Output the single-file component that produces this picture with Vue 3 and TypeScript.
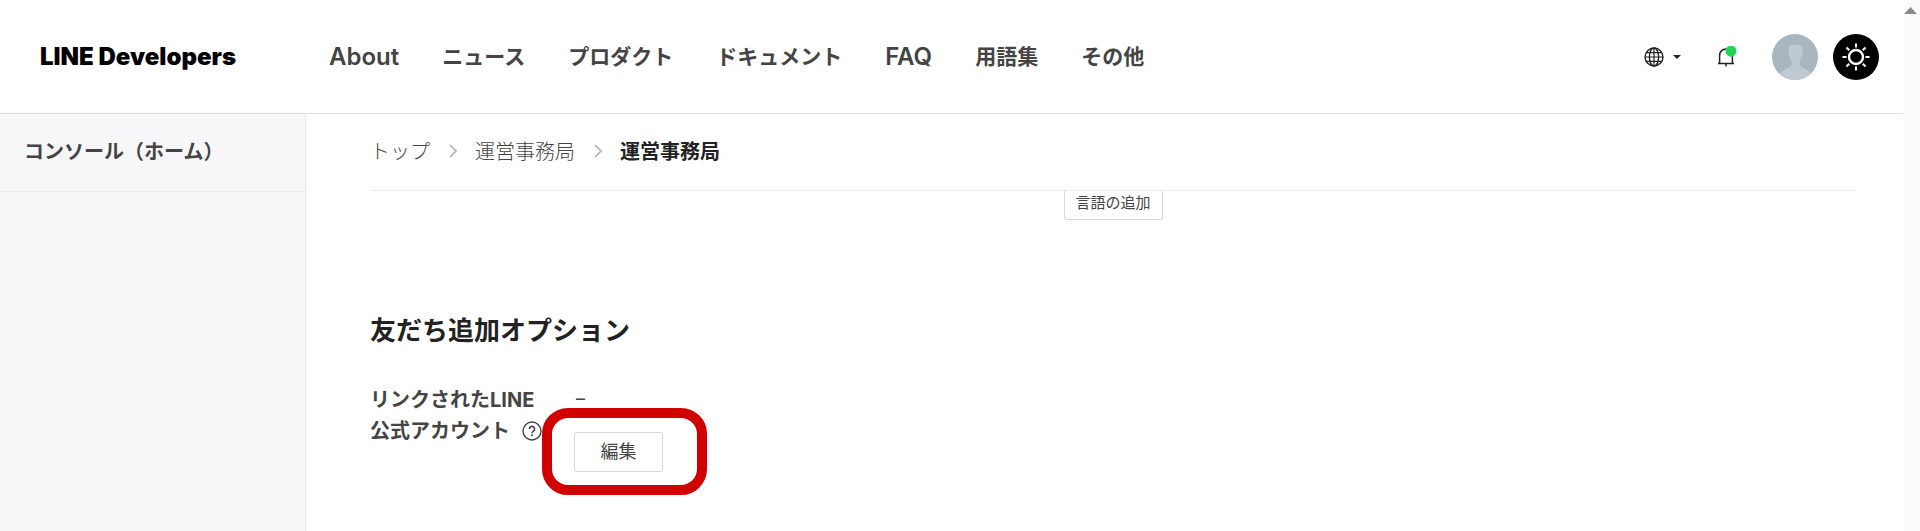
<script setup lang="ts">
interface NavItem {
  label: string
  latin?: boolean
}

const navItems: NavItem[] = [
  { label: 'About', latin: true },
  { label: 'ニュース' },
  { label: 'プロダクト' },
  { label: 'ドキュメント' },
  { label: 'FAQ', latin: true },
  { label: '用語集' },
  { label: 'その他' },
]

const parents: string[] = ['トップ', '運営事務局']
const rays: number[] = [0, 45, 90, 135, 180, 225, 270, 315]
</script>

<template>
  <div class="page">
    <div class="app">
      <header class="header">
        <a class="logo" href="#">LINE Developers</a>
        <nav class="nav">
          <a v-for="item in navItems" :key="item.label" href="#" :class="{ latin: item.latin }">{{ item.label }}</a>
        </nav>
        <div class="tools">
          <button class="lang" type="button" aria-label="Language">
            <svg width="20" height="20" viewBox="0 0 20 20" fill="none" stroke="#222" stroke-width="1.4">
              <circle cx="10" cy="10" r="9" />
              <ellipse cx="10" cy="10" rx="4.6" ry="9" />
              <path d="M10 1v18M1 10h18M2.600 5.600h14.800M2.600 14.400h14.800" stroke-width="1.2" />
            </svg>
            <svg width="8" height="4" viewBox="0 0 8 4"><path d="M0 0h8L4 4z" fill="#222" /></svg>
          </button>
          <button class="bell" type="button" aria-label="Notifications">
            <svg width="20" height="22" viewBox="0 0 20 22" fill="none" stroke="#222" stroke-width="1.5">
              <path d="M1 17.5h16M2.6 17.5V9.4a6.4 6.4 0 0 1 12.8 0v8.1M9 17.5v3" />
              <circle cx="14" cy="5.2" r="5.5" fill="#1fd655" stroke="none" />
            </svg>
          </button>
          <button class="round avatar" type="button" aria-label="Account">
            <svg width="46" height="46" viewBox="0 0 46 46">
              <path d="M17 14c0-2.600 2-3 6.500-3s6.500.4 6.500 3l.600 5c0 2.500-1 5-3 7.500v5c2 3 9.500 4 12.500 9.500A23 23 0 0 1 7 41c3-5.500 10.500-6.500 12.500-9.500v-5c-2-2.500-3-5-3-7.500z" fill="#bfc9d1" />
            </svg>
          </button>
          <button class="round theme" type="button" aria-label="Theme">
            <svg width="46" height="46" viewBox="0 0 46 46" fill="none" stroke="#fff" stroke-width="2">
              <circle cx="23" cy="23" r="7" stroke-width="2.4" />
              <path v-for="angle in rays" :key="angle" d="M23 9.500v4" :transform="`rotate(${angle} 23 23)`" />
            </svg>
          </button>
        </div>
      </header>
      <div class="body">
        <aside class="sidebar"><a href="#">コンソール（ホーム）</a></aside>
        <main class="main">
          <nav class="crumbs">
            <template v-for="parent in parents" :key="parent">
              <a href="#">{{ parent }}</a>
              <svg width="8" height="14" viewBox="0 0 8 14" fill="none" stroke="#b0b0b0" stroke-width="1.6"><path d="M1 1l6 6-6 6" /></svg>
            </template>
            <strong>運営事務局</strong>
          </nav>
          <div class="add-row"><button class="btn add" type="button">言語の追加</button></div>
          <h2>友だち追加オプション</h2>
          <section class="field">
            <h3>
              リンクされたLINE<br />公式アカウント
              <svg class="help" width="20" height="20" viewBox="0 0 20 20" fill="none" stroke="#444" stroke-width="1.4">
                <circle cx="10" cy="10" r="9" />
                <path d="M7.400 8a2.600 2.600 0 1 1 4 2.200c-.9.600-1.400 1-1.400 2" stroke-width="1.600" />
                <circle cx="10" cy="14.300" r="1" fill="#444" stroke="none" />
              </svg>
            </h3>
            <div class="value">
              <span class="dash">–</span>
              <div class="edit-wrap"><button class="btn edit" type="button">編集</button></div>
            </div>
          </section>
        </main>
      </div>
    </div>
    <div class="scroll-track"><svg width="13" height="7" viewBox="0 0 13 7"><path d="M0 7L6.500 0 13 7z" fill="#8a8a8a" /></svg></div>
  </div>
</template>

<style>
body {
  margin: 0;
  background: #fff;
  overflow: hidden;
}
</style>

<style scoped>
* {
  box-sizing: border-box;
}
.page {
  display: flex;
  min-height: 100vh;
  font-family: Inter, "Noto Sans CJK JP", sans-serif;
  color: #444;
}
.app {
  flex: 1;
  display: flex;
  flex-direction: column;
}
a {
  color: inherit;
  text-decoration: none;
}
button {
  padding: 0;
  border: 0;
  background: none;
  color: inherit;
  font-family: inherit;
}
svg {
  display: block;
}
.header {
  display: flex;
  align-items: center;
  height: 114px;
  padding: 0 24px 0 40px;
  border-bottom: 1px solid #dfdfdf;
}
.logo {
  width: 289px;
  color: #000;
  font-size: 24px;
  font-weight: 900;
}
.nav {
  display: flex;
  align-items: center;
  gap: 43px;
  font-size: 21px;
  line-height: 32px;
  font-weight: 700;
  white-space: nowrap;
}
.nav .latin {
  font-size: 24px;
  font-weight: 600;
}
.tools {
  display: flex;
  align-items: center;
  margin-left: auto;
}
.lang {
  display: flex;
  align-items: center;
  gap: 9px;
  margin-right: 36px;
}
.bell {
  margin-right: 35px;
}
.round {
  width: 46px;
  height: 46px;
  border-radius: 50%;
  overflow: hidden;
}
.avatar {
  margin-right: 15px;
  background: #a9b6c0;
}
.theme {
  background: #000;
}
.body {
  flex: 1;
  display: flex;
}
.sidebar {
  width: 306px;
  background: #f7f7fa;
  border-right: 1px solid #e8e8ea;
}
.sidebar a {
  display: block;
  padding: 22px 24px;
  border-bottom: 1px solid #ebebed;
  font-size: 20px;
  line-height: 33px;
  font-weight: 700;
}
.main {
  flex: 1;
  padding: 0 47px 0 64px;
}
.crumbs {
  display: flex;
  align-items: center;
  height: 77px;
  padding-bottom: 4px;
  border-bottom: 1px solid #ececec;
  font-size: 20px;
  font-weight: 300;
}
.crumbs svg {
  margin: 2px 18px 0 19px;
}
.crumbs strong {
  color: #222;
  font-weight: 700;
}
.add-row {
  display: flex;
  justify-content: center;
}
.btn {
  border: 1px solid #d8d8d8;
  border-radius: 3px;
  background: #fff;
}
.add {
  width: 99px;
  height: 29px;
  padding-bottom: 12px;
  border-top: 0;
  border-radius: 0 0 3px 3px;
  font-size: 15px;
}
h2 {
  margin: 91px 0 0;
  color: #222;
  font-size: 26px;
  line-height: 40px;
}
.field {
  display: flex;
  margin-top: 34px;
}
h3 {
  width: 172px;
  margin: 0;
  font-size: 20px;
  line-height: 31px;
  white-space: nowrap;
}
.help {
  display: inline-block;
  margin-left: 7px;
  vertical-align: -3px;
}
.value {
  display: flex;
  flex-direction: column;
  align-items: flex-start;
}
.dash {
  height: 23px;
  padding-left: 34px;
  font-size: 18px;
  line-height: 28px;
}
.edit-wrap {
  display: grid;
  place-items: center start;
  width: 165px;
  height: 87px;
  padding-left: 22px;
  border: 10px solid #d00000;
  border-radius: 26px;
}
.edit {
  width: 89px;
  height: 40px;
  padding-bottom: 4px;
  font-size: 18px;
}
.scroll-track {
  width: 17px;
  padding: 7px 0 0 1px;
  background: #fcfcfc;
}
</style>
